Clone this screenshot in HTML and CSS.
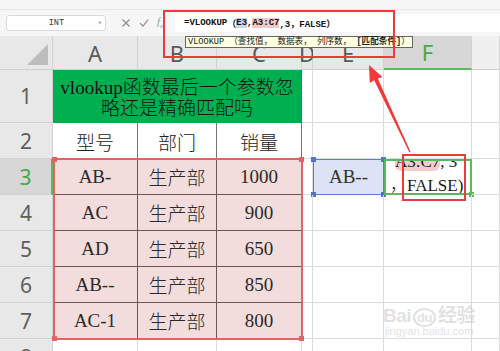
FILE: index.html
```html
<!DOCTYPE html>
<html lang="zh-CN">
<head>
    <meta charset="UTF-8">
    <title>vlookup</title>
    <link rel="stylesheet" href="styles.css">
</head>
<body>

<div class="app">
    <div class="topstrip"></div>

    <div class="fbar">
        <div class="namebox"><span class="name">INT</span><span class="caret">▾</span></div>
        <div class="fbtns">
            <svg class="ico" width="10" height="10" viewBox="0 0 10 10"><path d="M1.5 1.5 L8.5 8.5 M8.5 1.5 L1.5 8.5" stroke="#8c8c8c" stroke-width="1.2" fill="none"/></svg>
            <svg class="ico" width="10" height="10" viewBox="0 0 10 10"><path d="M1 5.2 L4 8.2 L9.2 1.5" stroke="#8c8c8c" stroke-width="1.2" fill="none"/></svg>
            <span class="fx">f<sub>x</sub></span>
        </div>
        <div class="finput"><b>=VLOOKUP</b>（<span class="ref-e">E3</span>,<span class="ref-a">A3:C7</span>,3，FALSE）</div>
    </div>

    <div class="sheet">
        <!-- column headers -->
        <div class="ch corner"><span class="tri"></span></div>
        <div class="ch">A</div>
        <div class="ch">B</div>
        <div class="ch">C</div>
        <div class="ch">D</div>
        <div class="ch">E</div>
        <div class="ch active">F</div>
        <div class="ch blank"></div>

        <!-- row 1 -->
        <div class="rh">1</div>
        <div class="title">vlookup函数最后一个参数忽<br>略还是精确匹配吗</div>
        <div class="cell"></div>
        <div class="cell"></div>
        <div class="cell"></div>
        <div class="cell"></div>

        <!-- row 2 -->
        <div class="rh">2</div>
        <div class="hd">型号</div>
        <div class="hd">部门</div>
        <div class="hd">销量</div>
        <div class="cell"></div>
        <div class="cell"></div>
        <div class="cell"></div>
        <div class="cell"></div>

        <!-- row 3 -->
        <div class="rh active">3</div>
        <div class="dt">AB-</div>
        <div class="dt">生产部</div>
        <div class="dt">1000</div>
        <div class="cell"></div>
        <div class="cell lookup">AB--<i class="k tl"></i><i class="k tr"></i><i class="k bl"></i><i class="k br"></i></div>
        <div class="cell editing">
            <div class="etext">
                <div class="eline1"><span class="ref-a">A3:C7</span>, 3</div>
                <div>，FALSE)</div>
            </div>
            <i class="k gbr"></i>
        </div>
        <div class="cell"></div>

        <!-- row 4 -->
        <div class="rh">4</div>
        <div class="dt">AC</div>
        <div class="dt">生产部</div>
        <div class="dt">900</div>
        <div class="cell"></div>
        <div class="cell"></div>
        <div class="cell"></div>
        <div class="cell"></div>

        <!-- row 5 -->
        <div class="rh">5</div>
        <div class="dt">AD</div>
        <div class="dt">生产部</div>
        <div class="dt">650</div>
        <div class="cell"></div>
        <div class="cell"></div>
        <div class="cell"></div>
        <div class="cell"></div>

        <!-- row 6 -->
        <div class="rh">6</div>
        <div class="dt">AB--</div>
        <div class="dt">生产部</div>
        <div class="dt">850</div>
        <div class="cell"></div>
        <div class="cell"></div>
        <div class="cell"></div>
        <div class="cell"></div>

        <!-- row 7 -->
        <div class="rh">7</div>
        <div class="dt">AC-1</div>
        <div class="dt">生产部</div>
        <div class="dt">800</div>
        <div class="cell"></div>
        <div class="cell"></div>
        <div class="cell"></div>
        <div class="cell"></div>

        <!-- row 8 -->
        <div class="rh">8</div>
        <div class="cell"></div>
        <div class="cell"></div>
        <div class="cell"></div>
        <div class="cell"></div>
        <div class="cell"></div>
        <div class="cell"></div>
        <div class="cell"></div>
    </div>

    <!-- overlays -->
    <div class="tip">VLOOKUP （查找值， 数据表， 列序数， <b>[匹配条件]</b>）</div>
    <div class="mark mark-formula"></div>
    <div class="mark mark-cell"></div>
    <div class="range"><i class="k tl"></i><i class="k tr"></i><i class="k bl"></i><i class="k br"></i></div>

    <svg class="arrow" width="500" height="351" viewBox="0 0 500 351">
        <polygon points="369,65 382.5,77 377.8,78.4 410.6,152 409.4,152.4 374.2,80.2 369.8,83" fill="#f03a3a"/>
    </svg>

    <div class="watermark">
        <div class="wm-logo">Bai<span class="paw">du</span>经验</div>
        <div class="wm-url">jingyan.baidu.com</div>
    </div>
</div>

</body>
</html>
```

FILE: styles.css
```css
* {
    box-sizing: border-box;
}

html, body {
    margin: 0;
    padding: 0;
    overflow: hidden;
}

body {
    background: #fff;
    font-family: "Noto Sans", "Noto Sans CJK SC", sans-serif;
    color: #333;
}

.app {
    position: relative;
    width: 500px;
    height: 351px;
    overflow: hidden;
}

/* formula bar */

.topstrip {
    height: 10px;
    background: #f6f6f6;
    border-bottom: 1px solid #e6e6e6;
}

.fbar {
    height: 26px;
    background: #f6f6f6;
    display: flex;
    align-items: center;
    padding-left: 6px;
}

.namebox {
    width: 100px;
    height: 16px;
    background: #fff;
    border: 1px solid #dadada;
    border-radius: 3px;
    display: flex;
    align-items: center;
    padding: 0 3px 0 8px;
    font: 8.5px "Liberation Mono", monospace;
    color: #333;
}

.namebox .name {
    flex: 1;
    text-align: center;
}

.namebox .caret {
    font-size: 7px;
    color: #999;
}

.fbtns {
    display: flex;
    align-items: center;
    gap: 8px;
    margin-left: 15px;
}

.fx {
    font: italic 11px "Liberation Serif", serif;
    color: #9a9a9a;
    width: 10px;
}

.fx sub {
    font-size: 7px;
}

.finput {
    flex: 1;
    height: 18px;
    margin-left: 8px;
    background: #fff;
    display: flex;
    align-items: center;
    padding-left: 9px;
    font: bold 9px "Liberation Mono", "Noto Sans CJK SC", monospace;
    color: #111;
    white-space: nowrap;
}

.finput .ref-e {
    background: #c9d6f0;
}

.finput .ref-a {
    background: #f2c9c9;
}

/* sheet grid */

.sheet {
    display: grid;
    grid-template-columns: 53px 85px 79px 85px 11px 71px 88px 28px;
    grid-template-rows: 34px 53px repeat(7, 36px);
    font-family: "Liberation Serif", "Noto Sans CJK SC", serif;
    font-size: 19px;
    font-weight: 300;
}

.sheet > div {
    display: flex;
    align-items: center;
    justify-content: center;
}

.cell {
    border-right: 1px solid #dcdcdc;
    border-bottom: 1px solid #dcdcdc;
    position: relative;
}

.ch {
    background: #e8e8e8;
    border-right: 1px solid #d2d2d2;
    border-bottom: 1px solid #cfcfcf;
    font: 22px "Noto Sans", sans-serif;
    color: #5a5a5a;
}

.ch.active {
    background: #d7d7d7;
    color: #4aa84a;
    border-bottom: 2px solid #5cb85c;
}

.ch.blank {
    background: #f0f0f0;
}

.ch.corner {
    justify-content: flex-end;
    align-items: flex-end;
    padding: 0 4px 4px 0;
}

.tri {
    width: 0;
    height: 0;
    border-left: 21px solid transparent;
    border-bottom: 21px solid #bdbdbd;
}

.rh {
    background: #e8e8e8;
    border-right: 1px solid #d2d2d2;
    border-bottom: 1px solid #d2d2d2;
    font: 21px "Noto Sans", sans-serif;
    color: #5e5e5e;
}

.rh.active {
    background: #d7d7d7;
    color: #4aa84a;
    border-right: 2px solid #5cb85c;
}

.title {
    grid-column: span 3;
    background: #00b050;
    color: #111;
    text-align: center;
    line-height: 21px;
    padding-top: 2px;
    border-right: 1px solid #5a6b5a;
}

.hd {
    background: #fff;
    border-right: 1px solid #7c7474;
    color: #222;
}

.dt {
    background: #f3dcdc;
    border-right: 1px solid #6e5656;
    border-bottom: 1px solid #6e5656;
    color: #2a2a2a;
}

/* lookup value cell */

.cell.lookup {
    background: #dbe3f4;
    border: 1.5px solid #5a7ed2;
}

.sheet > .cell.editing {
    display: block;
    border: 2px solid #5cb85c;
}

.etext {
    height: 32px;
    overflow: hidden;
    padding-left: 4px;
    font-size: 17px;
    line-height: 24px;
    white-space: nowrap;
    color: #1a1a1a;
}

.eline1 {
    margin-top: -11px;
    padding-left: 5px;
}

.etext .ref-a {
    background: #f2cccc;
    border-radius: 6px;
}

.k {
    position: absolute;
    width: 5px;
    height: 5px;
    background: #4f74cf;
}

.k.tl { left: -3px; top: -3px; }
.k.tr { right: -3px; top: -3px; }
.k.bl { left: -3px; bottom: -3px; }
.k.br { right: -3px; bottom: -3px; }

.k.gbr {
    right: -4px;
    bottom: -4px;
    background: #5cb85c;
}

/* overlays */

.tip {
    position: absolute;
    left: 185px;
    top: 36px;
    height: 12px;
    padding: 0 2px;
    background: #ffffe1;
    border: 1px solid #666;
    font: 8.6px "Liberation Mono", "Noto Sans CJK SC", monospace;
    line-height: 10px;
    color: #222;
    white-space: nowrap;
}

.mark {
    position: absolute;
    border: 2px solid #ec3b3b;
}

.mark-formula {
    left: 163px;
    top: 10px;
    width: 232px;
    height: 48px;
}

.mark-cell {
    left: 402px;
    top: 154px;
    width: 64px;
    height: 47px;
}

.range {
    position: absolute;
    left: 53px;
    top: 158px;
    width: 250px;
    height: 182px;
    border: 2px solid #e06464;
}

.range .k {
    background: #e06464;
}

.arrow {
    position: absolute;
    left: 0;
    top: 0;
}

.watermark {
    position: absolute;
    left: 383px;
    top: 300px;
    color: rgba(200, 200, 200, 0.55);
    text-align: center;
}

.wm-logo {
    font: bold 19px "Liberation Sans", "Noto Sans CJK SC", sans-serif;
    letter-spacing: -0.5px;
}

.wm-logo .paw {
    display: inline-block;
    font-size: 13px;
    border: 2px solid rgba(200, 200, 200, 0.55);
    border-radius: 50%;
    padding: 0 2px;
    margin: 0 2px;
}

.wm-url {
    font: 11px "Liberation Sans", sans-serif;
    margin-top: -2px;
}
```
